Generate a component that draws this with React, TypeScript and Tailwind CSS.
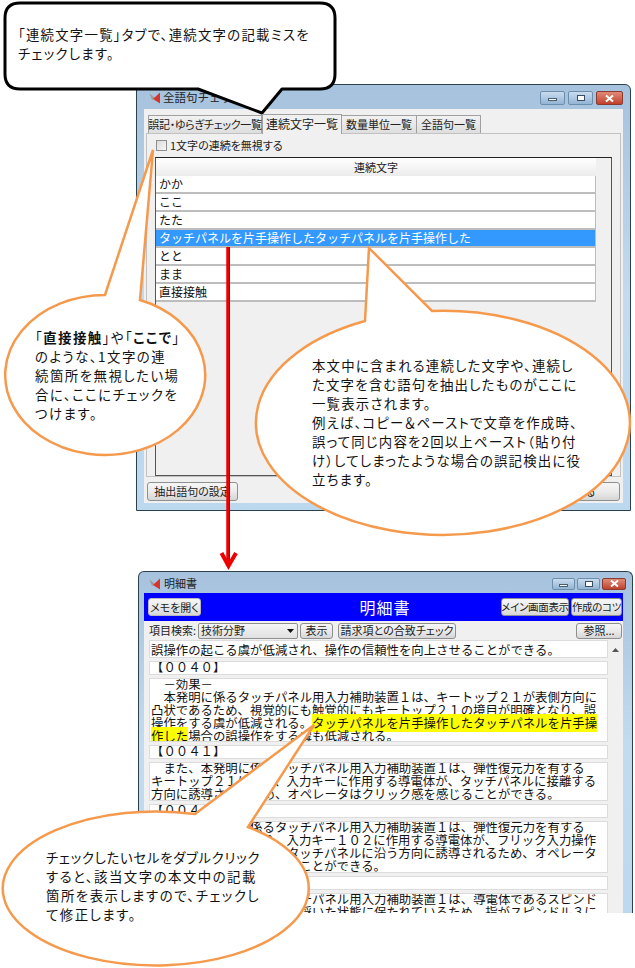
import React from 'react';

const jp = "font-['Noto_Sans_CJK_JP',sans-serif]";
const palt = "[font-feature-settings:'palt']";

function AppIcon() {
  return (
    <svg width="12" height="12" viewBox="0 0 12 12" className="shrink-0">
      <path d="M0.5 1.5 L6 6 L3 8 Z" fill="#9a9a9a" />
      <path d="M11 0.5 L4 7 L11 11.5 Z" fill="#d8352a" />
    </svg>
  );
}

function WinButtons({ large }: { large: boolean }) {
  const h = large ? 'h-[14px]' : 'h-[12px]';
  return (
    <div className={`ml-auto flex items-center ${large ? 'gap-[3px]' : 'gap-[2px]'}`}>
      <div className={`${h} ${large ? 'w-[25px]' : 'w-[23px]'} rounded-[2px] border border-[#6d8dac] bg-gradient-to-b from-[#c9dcef] to-[#93b4d4] flex items-center justify-center`}>
        <div className="mt-[3px] h-[3px] w-[9px] border border-[#4a5f75] bg-white" />
      </div>
      <div className={`${h} ${large ? 'w-[25px]' : 'w-[23px]'} rounded-[2px] border border-[#6d8dac] bg-gradient-to-b from-[#c9dcef] to-[#93b4d4] flex items-center justify-center`}>
        <div className="h-[6px] w-[8px] border border-[#3b4d60] bg-white" />
      </div>
      <div className={`${h} ${large ? 'w-[27px]' : 'w-[24px]'} rounded-[2px] border border-[#8a3a30] bg-gradient-to-b from-[#e08a78] to-[#c0402c] flex items-center justify-center`}>
        <svg width="9" height="7" viewBox="0 0 9 7">
          <path d="M1 0.5 L8 6.5 M8 0.5 L1 6.5" stroke="#ffffff" strokeWidth="2" />
        </svg>
      </div>
    </div>
  );
}

function Btn({ className, children }: { className: string; children: React.ReactNode }) {
  return (
    <div className={`${className} flex items-center justify-center whitespace-nowrap rounded-[3px] border border-[#8e8f8f] bg-gradient-to-b from-[#f6f6f6] via-[#ebebeb] to-[#d6d6d6] text-[11px] text-[#222] ${palt}`}>
      {children}
    </div>
  );
}

const rows = ['かか', 'ここ', 'たた', 'タッチパネルを片手操作したタッチパネルを片手操作した', 'とと', 'まま', '直接接触'];

function CheckWindow() {
  return (
    <section className="absolute left-[136px] top-[84px] flex h-[427px] w-[495px] flex-col rounded-t-[6px] border border-[#2a4250] bg-gradient-to-b from-[#a6c2dd] via-[#c4daee] to-[#bcd8ef] px-[7px] pb-[7px]">
      <div className="flex h-[24px] shrink-0 items-center gap-[2px] pl-[5px] pt-[2px]">
        <AppIcon />
        <span className="text-[11.5px] text-[#222]">全語句チェック</span>
        <WinButtons large />
      </div>
      <div className="flex flex-1 flex-col bg-[#f0f0f0] px-[2px]">
        <div className={`flex h-[24px] shrink-0 items-end whitespace-nowrap pl-[2px] text-[11px] text-[#222] ${palt}`}>
          <div className="flex h-[18px] w-[114px] items-center justify-center border border-b-0 border-[#a0a0a0] bg-gradient-to-b from-[#f2f2f2] to-[#dedede] tracking-[-0.3px]">誤記・ゆらぎチェック一覧</div>
          <div className="relative z-10 -mb-px flex h-[20px] w-[80px] items-center justify-center border border-b-0 border-[#a0a0a0] bg-[#f0f0f0] pb-[2px] text-[12px]">連続文字一覧</div>
          <div className="flex h-[18px] w-[75px] items-center justify-center border border-b-0 border-l-0 border-[#a0a0a0] bg-gradient-to-b from-[#f2f2f2] to-[#dedede]">数量単位一覧</div>
          <div className="flex h-[18px] w-[64px] items-center justify-center border border-b-0 border-l-0 border-[#a0a0a0] bg-gradient-to-b from-[#f2f2f2] to-[#dedede]">全語句一覧</div>
        </div>
        <div className="flex h-[344px] shrink-0 flex-col border border-[#c2c2c2] px-[8px]">
          <div className="flex h-[23px] shrink-0 items-center gap-[3px] pl-px">
            <div className="h-[11px] w-[11px] border border-[#8e8f8f] bg-gradient-to-br from-[#dcdcdc] to-[#f6f6f6]" />
            <span className={`text-[11px] text-[#222] ${palt}`}>1文字の連続を無視する</span>
          </div>
          <div className="flex-1 border border-[#555] border-t-[#222] pb-[1px]">
            <div className="mr-[15px]">
              <div className="flex h-[18px] items-center justify-center bg-gradient-to-b from-[#ffffff] to-[#ececec] text-[11px] text-[#222]">連続文字</div>
              {rows.map((r, i) => (
                <div
                  key={r}
                  className={`flex h-[18px] items-center border-b-2 border-r border-[#bdbdbd] pl-[3px] text-[12px] ${i === 3 ? 'bg-[#3399ff] text-white' : 'bg-white text-[#111]'}`}
                >
                  {r}
                </div>
              ))}
            </div>
          </div>
        </div>
        <div className="mt-[5px] flex justify-between pl-px pr-[1px]">
          <Btn className="h-[19px] w-[91px]">抽出語句の設定</Btn>
          <Btn className="h-[19px] w-[80px]">閉じる</Btn>
        </div>
      </div>
    </section>
  );
}

function Box({ h, lines }: { h: string; lines: React.ReactNode[] }) {
  return (
    <div className={`${h} shrink-0 overflow-hidden border border-[#dcdcdc] bg-white pl-px`}>
      <div className="-mt-px">
        {lines.map((l, i) => (
          <div key={i} className="h-[13px] whitespace-pre">{l}</div>
        ))}
      </div>
    </div>
  );
}

function DetailWindow() {
  return (
    <section className="absolute left-[138px] top-[571px] flex h-[342px] w-[495px] flex-col overflow-hidden rounded-t-[6px] border border-b-0 border-[#2a4250] bg-gradient-to-b from-[#a6c2dd] via-[#c4daee] to-[#bcd8ef] pl-[5px] pr-[9px]">
      <div className="-mr-[3px] flex h-[21px] shrink-0 items-center gap-[3px] pl-[5px] pt-[2px]">
        <AppIcon />
        <span className="text-[11px] text-[#222]">明細書</span>
        <WinButtons large={false} />
      </div>
      <div className="flex h-[28px] shrink-0 items-center bg-[#0000ff] px-[4px]">
        <Btn className="h-[18px] w-[53px] !border-[#b8b8b8]">メモを開く</Btn>
        <div className="flex-1 pl-[68px] text-center text-[16px] leading-none tracking-[1px] text-white">明細書</div>
        <div className="-mr-[3px] flex gap-[2px]">
          <Btn className="h-[18px] w-[68px] !text-[10.5px] tracking-[-0.3px]">メイン画面表示</Btn>
          <Btn className="h-[18px] w-[51px] !text-[10.5px] tracking-[-0.3px]">作成のコツ</Btn>
        </div>
      </div>
      <div className={`flex h-[19px] shrink-0 items-center bg-[#f0f0f0] pl-[5px] pr-px text-[11px] text-[#222] ${palt}`}>
        <span className="w-[49px] shrink-0">項目検索:</span>
        <div className="flex h-[16px] w-[100px] items-center justify-between rounded-[2px] border border-[#8e8f8f] bg-gradient-to-b from-[#f6f6f6] to-[#e0e0e0] px-[2px]">
          技術分野
          <svg width="7" height="4" viewBox="0 0 7 4" className="mr-[1px]"><path d="M0 0 H7 L3.5 4 Z" fill="#111" /></svg>
        </div>
        <Btn className="ml-[2px] h-[16px] w-[33px]">表示</Btn>
        <Btn className="ml-[5px] h-[16px] w-[118px]">請求項との合致チェック</Btn>
        <Btn className="ml-auto h-[16px] w-[46px]">参照...</Btn>
      </div>
      <div className="flex min-h-0 flex-1 bg-[#f0f0f0]">
        <div className="flex min-w-0 flex-1 flex-col gap-[3px] overflow-hidden pl-[5px] text-[12.4px] leading-[13px] text-[#111]">
          <Box h="h-[18px] pt-[4px]" lines={['誤操作の起こる虞が低減され、操作の信頼性を向上させることができる。']} />
          <Box h="h-[14px]" lines={['【００４０】']} />
          <Box
            h="h-[64px]"
            lines={[
              '　－効果－',
              '　本発明に係るタッチパネル用入力補助装置１は、キートップ２１が表側方向に',
              '凸状であるため、視覚的にも触覚的にもキートップ２１の境目が明確となり、誤',
              <>操作をする虞が低減される。<span className="bg-[#ffff00]">タッチパネルを片手操作したタッチパネルを片手操</span></>,
              <><span className="bg-[#ffff00]">作した</span>場合の誤操作をする虞も低減される。</>,
            ]}
          />
          <Box h="h-[14px]" lines={['【００４１】']} />
          <Box
            h="h-[39px]"
            lines={[
              '　また、本発明に係るタッチパネル用入力補助装置１は、弾性復元力を有する',
              'キートップ２１により、入力キーに作用する導電体が、タッチパネルに接離する',
              '方向に誘導されるため、オペレータはクリック感を感じることができる。',
            ]}
          />
          <Box h="h-[14px]" lines={['【００４２】']} />
          <Box
            h="h-[52px]"
            lines={[
              '　また、本発明に係るタッチパネル用入力補助装置１は、弾性復元力を有する',
              'キートップ２１により、入力キー１０２に作用する導電体が、フリック入力操作',
              '時に、キートップ２１がタッチパネルに沿う方向に誘導されるため、オペレータ',
              'はクリック感をより感じることができる。',
            ]}
          />
          <Box h="h-[14px]" lines={['【００４３】']} />
          <Box
            h="h-[40px]"
            lines={[
              '　また、本発明に係るタッチパネル用入力補助装置１は、導電体であるスピンド',
              'ル３をキートップ２１から浮いた状態に保たれているため、指がスピンドル３に',
            ]}
          />
        </div>
        <div className="flex w-[15px] shrink-0 justify-center pt-[8px]">
          <svg width="7" height="4" viewBox="0 0 7 4"><path d="M0 4 H7 L3.5 0 Z" fill="#555" /></svg>
        </div>
      </div>
    </section>
  );
}

function Note({ className, lines }: { className: string; lines: React.ReactNode[] }) {
  return (
    <div className={`absolute ${className} whitespace-nowrap text-[13.4px] leading-[19px] text-[#111] ${palt}`}>
      {lines.map((l, i) => (
        <div key={i}>{l}</div>
      ))}
    </div>
  );
}

export default function App() {
  return (
    <div className={`relative h-[968px] w-[635px] overflow-hidden bg-white ${jp}`}>
      <CheckWindow />
      <DetailWindow />

      <svg className="absolute left-0 top-0" width="635" height="968" viewBox="0 0 635 968" fill="none">
        {/* red arrow between the two windows */}
        <path d="M228 247 V566" stroke="#ee0000" strokeWidth="3.5" />
        <path d="M229.5 247 V566" stroke="#b80000" strokeWidth="1" />
        <path d="M221.5 553 L228.5 566 L236 553" stroke="#ee0000" strokeWidth="4" />
        {/* callouts */}
        <path
          d="M20 3 H320 Q335 3 335 18 V74 Q335 89 320 89 H282 L262 113 L198 89 H20 Q5 89 5 74 V18 Q5 3 20 3 Z"
          fill="#ffffff"
          stroke="#000000"
          strokeWidth="3"
          strokeLinejoin="round"
        />
        <path d="M105 295 L153 150 L140 300 A100 80 0 1 1 105 295 Z" fill="#ffffff" stroke="#f59a4d" strokeWidth="2.5" />
        <path d="M365 321 L369 248 L432 311 A187 112 0 1 1 365 321 Z" fill="#ffffff" stroke="#f59a4d" strokeWidth="2.5" />
        <path d="M195 814 L314 725 L248 827 A153 77 0 1 1 195 814 Z" fill="#ffffff" stroke="#f59a4d" strokeWidth="2.5" />
      </svg>

      <Note className="left-[18px] top-[25px] tracking-[1.25px]" lines={['「連続文字一覧」タブで、連続文字の記載ミスを', 'チェックします。']} />
      <Note
        className="left-[35px] top-[328px] tracking-[1.5px]"
        lines={[
          <>「<b>直接接触</b>」や「<b>ここで</b>」</>,
          'のような、1文字の連',
          '続箇所を無視したい場',
          '合に、ここにチェックを',
          'つけます。',
        ]}
      />
      <Note
        className="left-[312px] top-[356px] tracking-[1.2px]"
        lines={[
          '本文中に含まれる連続した文字や、連続し',
          'た文字を含む語句を抽出したものがここに',
          '一覧表示されます。',
          '例えば、コピー＆ペーストで文章を作成時、',
          '誤って同じ内容を2回以上ペースト（貼り付',
          'け）してしまったような場合の誤記検出に役',
          '立ちます。',
        ]}
      />
      <Note
        className="left-[46px] top-[848px] tracking-[1.5px]"
        lines={[
          <span className="tracking-[0.7px]">チェックしたいセルをダブルクリック</span>,
          'すると、該当文字の本文中の記載',
          '箇所を表示しますので、チェックし',
          'て修正します。',
        ]}
      />
    </div>
  );
}
